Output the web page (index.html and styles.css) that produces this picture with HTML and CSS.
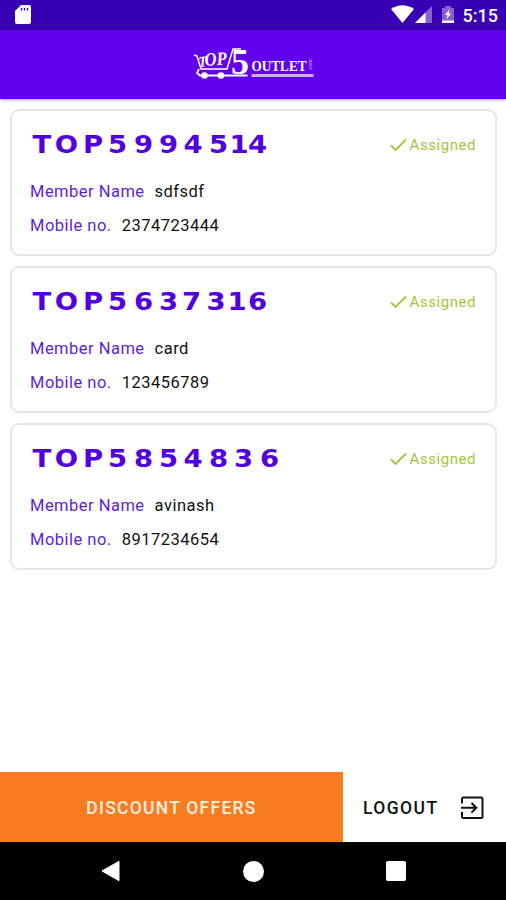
FILE: index.html
```html
<!DOCTYPE html>
<html lang="en">
<head>
    <meta charset="UTF-8">
    <meta name="viewport" content="width=device-width, initial-scale=1.0">
    <title>Top 5 Outlet</title>
    <link rel="stylesheet" href="styles.css">
</head>
<body>

    <div class="status-bar">
        <svg class="sd-icon" width="17" height="20" viewBox="0 0 17 20">
            <path d="M6 0H14Q16 0 16 2V17Q16 19 14 19H2Q0 19 0 17V6Z" fill="#fff"/>
            <path d="M6.5 3V5.5M9.5 3V5.5M12.5 3V5.5" stroke="#3700b3" stroke-width="1.4"/>
        </svg>
        <div class="status-right">
            <svg width="65" height="20" viewBox="0 0 65 20">
                <path d="M0 4Q11.500 -3.500 23 4L11.500 18Z" fill="#fff"/>
                <path d="M41 1V18H24Z" fill="#8760d2"/>
                <path d="M34.500 7.500V18H24Z" fill="#fff"/>
                <path d="M54 1H60V3H63V18H51V3H54Z" fill="#8760d2"/>
                <path d="M51 15.500H63V18H51Z" fill="#fff"/>
                <path d="M58.500 4L54 10H56.500L55.500 14.500L60 8.500H57.500Z" fill="#fff"/>
            </svg>
            <span class="clock">5:15</span>
        </div>
    </div>

    <header class="app-bar">
        <svg class="logo" width="120" height="36" viewBox="0 0 120 36">
            <g fill="none" stroke="#fff">
                <path d="M1 8L4 9L8 22H34L40 2H48" stroke-width="1.5"/>
                <path d="M6 22L4 26L7 28.500H54.500" stroke-width="1.800"/>
                <path d="M58.500 28.500H120.500" stroke="#c9adfa" stroke-width="2.800"/>
            </g>
            <circle cx="11.500" cy="28.500" r="3.300" fill="#fff"/>
            <circle cx="28" cy="28.500" r="3.300" fill="#fff"/>
            <g class="logo-text">
                <text x="6" y="20" font-size="15" font-style="italic" transform="rotate(-5 6 20)" textLength="8" lengthAdjust="spacingAndGlyphs">T</text>
                <text x="12" y="19" font-size="19" font-style="italic" transform="rotate(-4 12 19)" textLength="22" lengthAdjust="spacingAndGlyphs">OP</text>
                <text x="38" y="27" font-size="36" textLength="18" lengthAdjust="spacingAndGlyphs">5</text>
                <text x="58.500" y="23.500" font-size="15" textLength="55" lengthAdjust="spacingAndGlyphs">OUTLET</text>
                <text class="logo-com" x="119" y="23.500" font-size="5.500" transform="rotate(-90 119 23.500)">.com</text>
            </g>
        </svg>
    </header>

    <main class="members">
        <section class="card">
            <div class="card-head">
                <svg class="code" width="280" height="30">
                    <text y="20" x="10.900 33.200 57.300 79.500 103.200 125.900 148.200 171.400 190 206.800">TOP5994514</text>
                </svg>
                <div class="assigned">
                    <svg width="17" height="14" viewBox="0 0 17 14"><path d="M1 7.500L5.500 12L16 1.500"/></svg>
                    <span>Assigned</span>
                </div>
            </div>
            <div class="row"><span class="label">Member Name</span><span class="value">sdfsdf</span></div>
            <div class="row"><span class="label">Mobile no.</span><span class="value">2374723444</span></div>
        </section>

        <section class="card">
            <div class="card-head">
                <svg class="code" width="280" height="30">
                    <text y="20" x="10.900 33.200 57.300 79.500 103.200 125.900 146.800 169.100 188.200 206.800">TOP5637316</text>
                </svg>
                <div class="assigned">
                    <svg width="17" height="14" viewBox="0 0 17 14"><path d="M1 7.500L5.500 12L16 1.500"/></svg>
                    <span>Assigned</span>
                </div>
            </div>
            <div class="row"><span class="label">Member Name</span><span class="value">card</span></div>
            <div class="row"><span class="label">Mobile no.</span><span class="value">123456789</span></div>
        </section>

        <section class="card">
            <div class="card-head">
                <svg class="code" width="280" height="30">
                    <text y="20" x="10.900 33.200 57.300 79.500 103.200 125.900 148.200 171.400 194.100 217.700">TOP5854836</text>
                </svg>
                <div class="assigned">
                    <svg width="17" height="14" viewBox="0 0 17 14"><path d="M1 7.500L5.500 12L16 1.500"/></svg>
                    <span>Assigned</span>
                </div>
            </div>
            <div class="row"><span class="label">Member Name</span><span class="value">avinash</span></div>
            <div class="row"><span class="label">Mobile no.</span><span class="value">8917234654</span></div>
        </section>
    </main>

    <footer class="actions">
        <button class="offers">DISCOUNT OFFERS</button>
        <button class="logout">
            <span>LOGOUT</span>
            <svg width="24" height="24" viewBox="0 0 24 24">
                <path d="M2 7.500V3Q2 1.500 3.500 1.500H21Q22.500 1.500 22.500 3V20.500Q22.500 22 21 22H3.500Q2 22 2 20.500V16"/>
                <path d="M1 11.800H16M11.500 7L16.300 11.800L11.500 16.600"/>
            </svg>
        </button>
    </footer>

    <nav class="nav-bar">
        <svg width="20" height="22" viewBox="0 0 20 22"><path d="M1 11L18 1.300V20.700Z" fill="#fff" stroke="#fff" stroke-linejoin="round"/></svg>
        <span class="home"></span>
        <span class="recent"></span>
    </nav>

</body>
</html>
```

FILE: styles.css
```css
body {
    margin: 0;
    height: 900px;
    display: flex;
    flex-direction: column;
    background-color: #fff;
    font-family: Roboto, sans-serif;
    overflow: hidden;
}
svg {
    display: block;
}
.status-bar {
    height: 30px;
    padding: 0 8px 0 15px;
    box-sizing: border-box;
    display: flex;
    align-items: center;
    justify-content: space-between;
    background-color: #3700b3;
}
.status-right {
    display: flex;
    align-items: center;
    gap: 7px;
}
.clock {
    padding-top: 2px;
    color: #fff;
    font-size: 18px;
    font-weight: 500;
    line-height: 20px;
}
.app-bar {
    height: 69px;
    display: flex;
    align-items: center;
    justify-content: center;
    background-color: #6200ee;
    box-shadow: 0 1px 3px rgba(0, 0, 0, 0.35);
}
.logo {
    overflow: visible;
}
.logo-text {
    fill: #fff;
    font-family: "Liberation Serif", serif;
    font-weight: bold;
}
.logo-com {
    fill: #b48df8;
}
.members {
    flex: 1;
    padding: 10px 9px 0 10px;
    display: flex;
    flex-direction: column;
    gap: 10px;
}
.card {
    height: 147px;
    box-sizing: border-box;
    padding: 22px 19px 0 18px;
    border: 2px solid #e6e6e6;
    border-radius: 9px;
}
.card-head {
    height: 41px;
    display: flex;
    justify-content: space-between;
}
.code {
    overflow: visible;
    fill: #5200e0;
    font-family: "DejaVu Sans", sans-serif;
    font-size: 25px;
    font-weight: bold;
}
.code text {
    text-anchor: middle;
    transform: scaleX(1.1);
}
.assigned {
    height: 23px;
    display: flex;
    align-items: center;
    gap: 3px;
    color: #a4c639;
    font-size: 15px;
    letter-spacing: 0.55px;
}
.assigned path {
    fill: none;
    stroke: #a4c639;
    stroke-width: 1.8;
}
.row {
    height: 34px;
    display: flex;
    align-items: center;
    gap: 10px;
    font-size: 16.5px;
    letter-spacing: 0.48px;
}
.label {
    color: #5a1fe0;
}
.value {
    color: #111;
}
.actions {
    height: 70px;
    display: flex;
}
button {
    padding: 2px 0 0;
    border: none;
    font-family: inherit;
    font-size: 17.5px;
    font-weight: 500;
}
.offers {
    width: 343px;
    background-color: #f97d20;
    color: #fff0e2;
    letter-spacing: 1.25px;
}
.logout {
    flex: 1;
    padding: 1px 22px 0 20px;
    display: flex;
    align-items: center;
    justify-content: space-between;
    background-color: #fff;
    color: #111;
    letter-spacing: 1.4px;
}
.logout path {
    fill: none;
    stroke: #111;
    stroke-width: 2;
}
.nav-bar {
    height: 58px;
    padding: 0 100px 0 101px;
    display: flex;
    align-items: center;
    justify-content: space-between;
    background-color: #000;
}
.home {
    width: 21px;
    height: 21px;
    border-radius: 50%;
    background-color: #fff;
}
.recent {
    width: 20px;
    height: 20px;
    border-radius: 2px;
    background-color: #fff;
}
```
